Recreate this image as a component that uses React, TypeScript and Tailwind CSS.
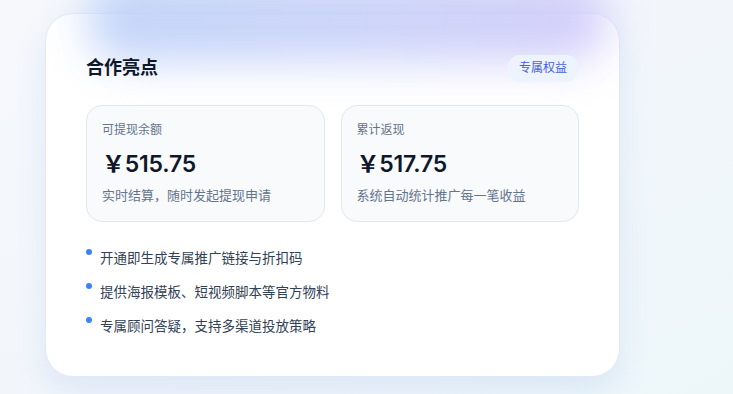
import React from "react";

const bullets = [
  "开通即生成专属推广链接与折扣码",
  "提供海报模板、短视频脚本等官方物料",
  "专属顾问答疑，支持多渠道投放策略",
];

function StatCard({ label, amount, desc }: { label: string; amount: string; desc: string }) {
  return (
    <div className="flex flex-col rounded-2xl border border-[#e2e8f0] bg-[#f8fafc] px-[15px] py-4">
      <div className="text-[12px] leading-4 text-[#64748b]">{label}</div>
      <div className="mt-[10px] text-[23px] font-semibold leading-8 tracking-[-0.2px] text-[#0f172a]">
        ￥{amount}
      </div>
      <div className="mt-[5px] text-[13px] leading-5 text-[#64748b]">{desc}</div>
    </div>
  );
}

export default function App() {
  return (
    <div
      className="relative min-h-[394px] w-full overflow-hidden bg-gradient-to-br from-[#f6f8fc] via-[#f2f6fb] to-[#edf7fa] pl-[45px] pt-[13px]"
      style={{ fontFamily: 'Inter, "Noto Sans CJK SC", sans-serif' }}
    >
      <div className="relative w-[575px] rounded-[28px] border border-[#e3e9f3] bg-white shadow-[0_14px_30px_rgba(96,140,220,0.14)]">
        <div className="pointer-events-none absolute left-[40px] right-[10px] top-[-36px] h-[84px] rounded-full bg-gradient-to-r from-[#bcd0f8] via-[#c6d0f8] to-[#cfc9fa] opacity-90 blur-[22px]" />
        <div className="relative px-10 pb-10 pt-10">
          <div className="flex items-center justify-between">
            <div className="text-[18px] font-bold leading-7 text-[#0f172a]">合作亮点</div>
            <div className="flex h-[27px] items-center rounded-full bg-[#edf3ff] px-3 text-[12px] text-[#4461d9]">
              专属权益
            </div>
          </div>
          <div className="mt-[23px] grid grid-cols-2 gap-4">
            <StatCard label="可提现余额" amount="515.75" desc="实时结算，随时发起提现申请" />
            <StatCard label="累计返现" amount="517.75" desc="系统自动统计推广每一笔收益" />
          </div>
          <ul className="mt-[26px] flex flex-col gap-[14px]">
            {bullets.map((b) => (
              <li key={b} className="flex items-start gap-[8px] text-[13.5px] leading-5 text-[#334155]">
                <span className="mt-[1px] h-[6px] w-[6px] shrink-0 rounded-full bg-[#3b82f6]" />
                <span>{b}</span>
              </li>
            ))}
          </ul>
        </div>
      </div>
    </div>
  );
}
